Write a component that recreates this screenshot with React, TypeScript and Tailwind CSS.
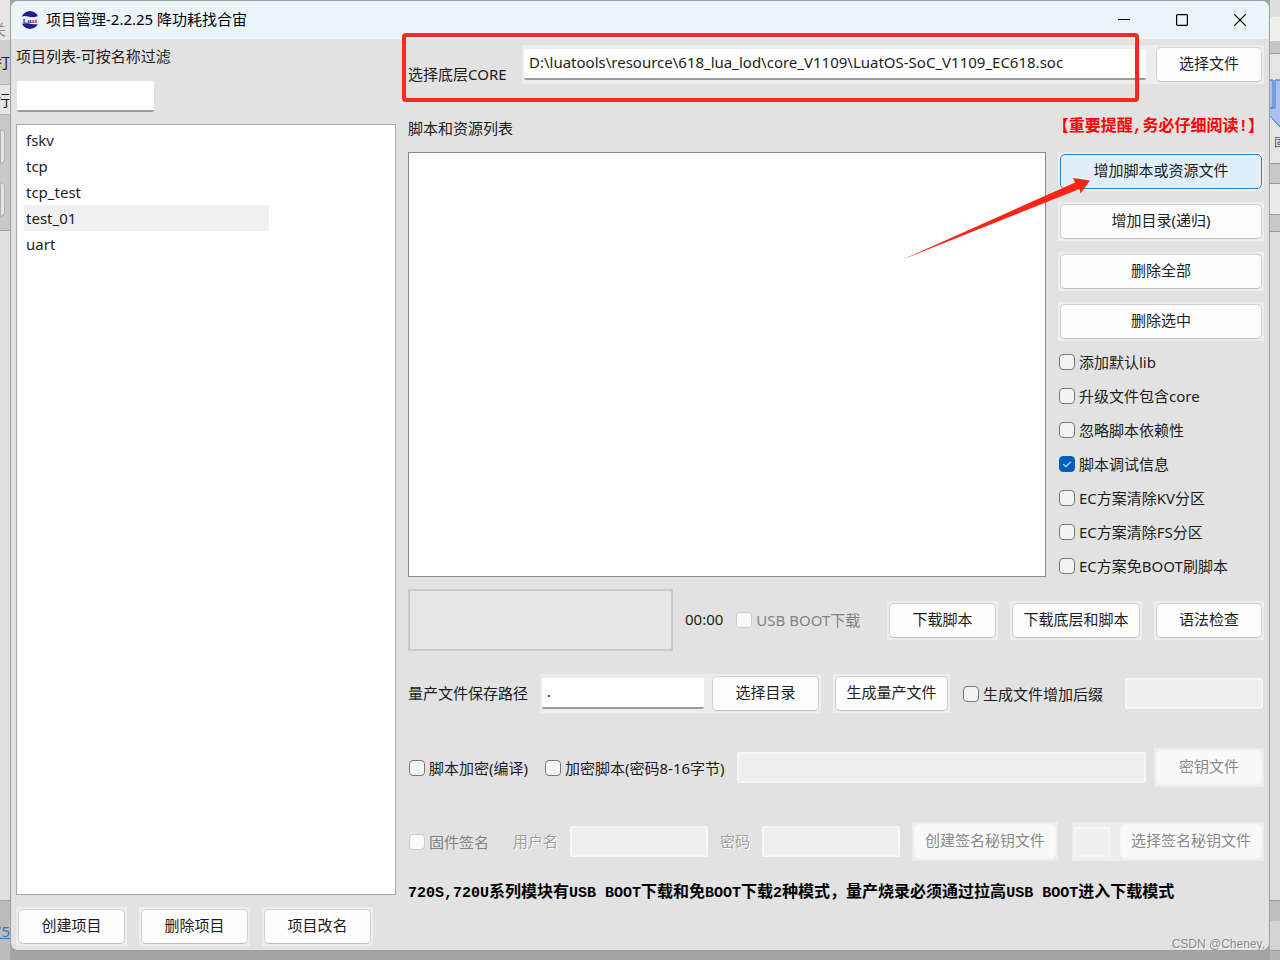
import { useState } from 'react';
import type { ReactNode } from 'react';
import clsx from 'clsx';

const projects = ['fskv', 'tcp', 'tcp_test', 'test_01', 'uart'];

const scriptActions = ['增加脚本或资源文件', '增加目录(递归)', '删除全部', '删除选中'];

const options = [
    { id: 'defaultLib', label: '添加默认lib', checked: false },
    { id: 'includeCore', label: '升级文件包含core', checked: false },
    { id: 'ignoreDeps', label: '忽略脚本依赖性', checked: false },
    { id: 'debugInfo', label: '脚本调试信息', checked: true },
    { id: 'clearKv', label: 'EC方案清除KV分区', checked: false },
    { id: 'clearFs', label: 'EC方案清除FS分区', checked: false },
    { id: 'skipBoot', label: 'EC方案免BOOT刷脚本', checked: false },
];

interface ButtonProps {
    children: ReactNode;
    className?: string;
    active?: boolean;
    disabled?: boolean;
}

function Button({ children, className, active, disabled }: ButtonProps) {
    return (
        <button
            type="button"
            disabled={disabled}
            className={clsx(
                'h-[35px] shrink-0 rounded-[5px] border pb-[3px] whitespace-nowrap',
                active && 'border-[#2b81c9] bg-[#e0eef9]',
                disabled && 'border-[#f6f6f6] bg-[#f9f9f9] text-[#8a8a8a]',
                !active && !disabled && 'border-[#d2d2d2] border-b-[#bdbdbd] bg-[#fdfdfd]',
                className
            )}
        >
            {children}
        </button>
    );
}

// Lighter plate that sits behind native buttons and inputs
function Plate({ children, className }: { children: ReactNode; className?: string }) {
    return <div className={clsx('flex items-center bg-[#ededed] p-[2px]', className)}>{children}</div>;
}

interface CheckboxProps {
    id: string;
    label: string;
    checked?: boolean;
    disabled?: boolean;
}

function Checkbox({ id, label, checked, disabled }: CheckboxProps) {
    return (
        <label htmlFor={id} className={clsx('flex shrink-0 items-center gap-1 pl-px whitespace-nowrap', disabled && 'text-[#838383]')}>
            <span className="relative flex">
                <input
                    type="checkbox"
                    id={id}
                    defaultChecked={checked}
                    disabled={disabled}
                    className="peer size-4 appearance-none rounded-[4px] border border-[#767676] bg-[#f4f4f4] checked:border-[#005fb8] checked:bg-[#005fb8] disabled:border-[#cbcbcb] disabled:bg-[#fafafa]"
                />
                <svg viewBox="0 0 16 16" className="pointer-events-none absolute inset-0 hidden size-4 peer-checked:block">
                    <path d="M4.2 8.2 L6.8 10.7 L11.8 5.8" fill="none" stroke="#d4e6f7" strokeWidth="1.1" />
                </svg>
            </span>
            {label}
        </label>
    );
}

function TextField({ id, label, value, disabled, className }: { id: string; label?: string; value?: string; disabled?: boolean; className?: string }) {
    return (
        <input
            type="text"
            id={id}
            aria-label={label}
            defaultValue={value}
            disabled={disabled}
            className={clsx(
                'min-w-0 rounded-[2px] px-[5px] outline-none',
                disabled ? 'border-2 border-[#f6f6f6] bg-[#efefef]' : 'border-b-2 border-[#9b9b9b] bg-white pb-[3px]',
                className
            )}
        />
    );
}

function Logo() {
    return (
        <svg viewBox="0 0 18 18" className="size-[18px]">
            <circle cx="9" cy="9" r="9" fill="#1d2088" />
            <path d="M0 6 C4 3.800 7 6.200 11 6.200 C14 6.200 16 5.600 18 4.800 V12.400 C14 14 11 13 8 12.500 C5 12 2 12.400 0 13Z" fill="#eef4fa" />
            <text x="9" y="11.6" fontSize="7" fontWeight="bold" fontFamily="Liberation Serif, serif" textAnchor="middle" fill="#1d2088">
                Lu<tspan fill="#d7262b">a</tspan>t
            </text>
        </svg>
    );
}

function TitleBar() {
    return (
        <header className="flex h-[38px] shrink-0 items-center bg-[#ebf4f9] pl-[10px] text-black">
            <Logo />
            <h1 className="ml-[7px] flex-1 pb-0.5">项目管理-2.2.25 降功耗找合宙</h1>
            <button type="button" aria-label="最小化" className="flex h-full w-[58px] items-center justify-center">
                <svg viewBox="0 0 12 12" className="size-3">
                    <path d="M0 5.5 H12" stroke="#000" />
                </svg>
            </button>
            <button type="button" aria-label="最大化" className="flex h-full w-[58px] items-center justify-center">
                <svg viewBox="0 0 12 12" className="size-3">
                    <rect x="0.6" y="0.6" width="10.8" height="10.8" rx="1" fill="none" stroke="#000" strokeWidth="1.2" />
                </svg>
            </button>
            <button type="button" aria-label="关闭" className="flex h-full w-[58px] items-center justify-center">
                <svg viewBox="0 0 12 12" className="size-3">
                    <path d="M0 0 L12 12 M12 0 L0 12" stroke="#000" strokeWidth="1.2" />
                </svg>
            </button>
        </header>
    );
}

// What shows of the parent window on the left side
function LeftEdge() {
    return (
        <div className="flex w-[10px] shrink-0 flex-col overflow-hidden bg-[#c8c8c8] whitespace-nowrap">
            <div className="flex h-10 justify-end bg-[#e6e6e6] pt-[19px] pr-1 text-[#8c8c8c]">关</div>
            <div className="flex h-11 items-center justify-end bg-[#cecece]">打</div>
            <div className="flex h-[31px] items-center justify-end border-y border-[#b4b4b4] bg-[#e6e6e6]">行</div>
            <div className="flex h-[115px] flex-col gap-[18px] pt-[14px] pr-[5px]">
                <div className="h-[35px] rounded-r-[5px] border border-[#b0b0b0] bg-[#e4e4e4]" />
                <div className="h-[35px] rounded-r-[5px] border border-[#b0b0b0] bg-[#e4e4e4]" />
            </div>
            <div className="flex-1 border-y border-[#a0a0a0] bg-[#e0e0e0]" />
            <div className="flex h-[59px] items-center justify-end bg-[#bcbcbc] text-[#3a74b8] underline">75</div>
        </div>
    );
}

function RightEdge() {
    return (
        <div className="flex w-[10px] shrink-0 flex-col overflow-hidden bg-[#c8c8c8] whitespace-nowrap">
            <div className="h-[17px] bg-[#dedede]" />
            <div className="h-6 bg-[#efefef]" />
            <div className="h-3 bg-[#c6c6c6]" />
            <div className="flex h-[110px] flex-col border-t border-[#9c9c9c] bg-[#e4e4e4] pt-[25px]">
                <svg viewBox="0 0 10 50" className="h-[50px] w-[10px] shrink-0">
                    <path d="M0 1 H10 V49 L0 37Z" fill="#a9c1ec" />
                    <path d="M0 1 H3 V29 H0 M10 1 H5 V29 H0 M0 37 L10 48" fill="none" stroke="#3f78cf" />
                </svg>
                <span className="mt-1.5 pl-1 text-xs text-[#555]">固件</span>
            </div>
            <div className="h-[21px] border-y border-[#9c9c9c]" />
            <div className="h-[30px] bg-[#ebebeb]" />
            <div className="h-[18px] border-y border-[#9c9c9c]" />
            <div className="flex-1 bg-[#dedede]" />
            <div className="h-[21px] border-t border-[#9c9c9c] bg-[#bebebe]" />
            <div className="h-[30px] border-b border-[#9c9c9c] bg-[#d4d4d4]" />
            <div className="h-[9px] bg-[#b4b4b4]" />
        </div>
    );
}

function ProjectPanel() {
    const [selected, setSelected] = useState('test_01');

    return (
        <aside className="flex w-[380px] shrink-0 flex-col pt-[7px] pb-1">
            <label htmlFor="filter">项目列表-可按名称过滤</label>
            <TextField id="filter" className="mt-[15px] ml-px h-[31px] w-[137px]" />
            <ul className="mt-3 flex-1 border border-[#a5a9b2] bg-white px-[7px] pt-0.5">
                {projects.map((name) => (
                    <li
                        key={name}
                        onClick={() => setSelected(name)}
                        className={clsx('h-[26px] w-[245px] pl-0.5 leading-[26px]', name === selected && 'bg-[#f0f0f0]')}
                    >
                        {name}
                    </li>
                ))}
            </ul>
            <div className="mt-3 flex gap-3">
                {['创建项目', '删除项目', '项目改名'].map((text) => (
                    <Plate key={text}>
                        <Button className="w-[107px]">{text}</Button>
                    </Plate>
                ))}
            </div>
        </aside>
    );
}

function ScriptPanel() {
    return (
        <main className="flex min-w-0 flex-1 flex-col pt-1.5 pb-[46px]">
            <div className="relative flex items-end">
                <label htmlFor="core" className="mr-3 w-[102px] shrink-0">选择底层CORE</label>
                <Plate className="min-w-0 flex-1 gap-[10px]">
                    <TextField id="core" value="D:\luatools\resource\618_lua_lod\core_V1109\LuatOS-SoC_V1109_EC618.soc" className="h-[31px] flex-1" />
                    <Button className="w-[106px]">选择文件</Button>
                </Plate>
                <div className="pointer-events-none absolute -top-3 right-[125px] -bottom-[18px] -left-1.5 rounded-[4px] border-4 border-[#f72a1d]" />
            </div>

            <div className="flex items-end justify-between pt-[33px] pb-[14px]">
                <h2>脚本和资源列表</h2>
                <strong className="mb-px font-['Liberation_Mono','Noto_Sans_CJK_SC',monospace] text-base leading-5 text-[#f00]">
                    【重要提醒,务必仔细阅读!】
                </strong>
            </div>

            <div className="relative flex flex-1">
                <div className="mb-3 flex-1 border border-[#868b94] bg-white" />
                <div className="ml-3 flex w-[206px] flex-col">
                    <div className="flex flex-col gap-[11px]">
                        {scriptActions.map((text, i) => (
                            <Plate key={text}>
                                <Button active={i === 0} className="w-full">{text}</Button>
                            </Plate>
                        ))}
                    </div>
                    <div className="mt-1">
                        {options.map((option) => (
                            <div key={option.id} className="flex h-[34px] items-center">
                                <Checkbox {...option} />
                            </div>
                        ))}
                    </div>
                </div>
                <svg viewBox="0 0 192 88" className="pointer-events-none absolute top-[24px] right-[172px] h-[88px] w-[192px]">
                    <path d="M1.500 84 L175 6.500 L173 2 L190 4.500 L180.500 17.500 L179.500 13 Z" fill="#fb2415" />
                </svg>
            </div>

            <div className="flex items-center">
                <div className="h-[62px] w-[265px] shrink-0 border-2 border-[#c9c9c9] bg-[#e6e6e6]" />
                <time className="mx-3 pb-0.5">00:00</time>
                <Checkbox id="usbBoot" label="USB BOOT下载" disabled />
                <div className="ml-auto flex gap-3">
                    <Plate><Button className="w-[107px]">下载脚本</Button></Plate>
                    <Plate><Button className="w-[128px]">下载底层和脚本</Button></Plate>
                    <Plate><Button className="w-[106px]">语法检查</Button></Plate>
                </div>
            </div>

            <div className="mt-[23px] flex items-center gap-3">
                <label htmlFor="savePath" className="shrink-0 pb-0.5">量产文件保存路径</label>
                <Plate className="gap-2">
                    <TextField id="savePath" value="." className="h-[31px] w-[162px]" />
                    <Button className="w-[107px]">选择目录</Button>
                </Plate>
                <Plate><Button className="w-[113px]">生成量产文件</Button></Plate>
                <Checkbox id="suffix" label="生成文件增加后缀" />
                <TextField id="suffixText" label="后缀" disabled className="mr-px ml-auto h-[31px] w-[138px]" />
            </div>

            <div className="mt-[35px] flex items-center">
                <Checkbox id="encryptCompile" label="脚本加密(编译)" />
                <div className="ml-4">
                    <Checkbox id="encryptScript" label="加密脚本(密码8-16字节)" />
                </div>
                <TextField id="scriptPassword" label="加密密码" disabled className="mr-2 ml-3 h-[31px] flex-1" />
                <Plate><Button disabled className="w-[106px]">密钥文件</Button></Plate>
            </div>

            <div className="mt-[35px] flex items-center gap-3">
                <Checkbox id="sign" label="固件签名" disabled />
                <label htmlFor="userName" className="ml-3 shrink-0 pb-0.5 text-[#a0a0a0] text-shadow-[1px_1px_0_#fff]">用户名</label>
                <TextField id="userName" disabled className="h-[31px] w-[138px]" />
                <label htmlFor="password" className="shrink-0 pb-0.5 text-[#a0a0a0] text-shadow-[1px_1px_0_#fff]">密码</label>
                <TextField id="password" disabled className="h-[31px] w-[138px]" />
                <Plate><Button disabled className="w-[142px]">创建签名秘钥文件</Button></Plate>
                <Plate className="ml-auto gap-[10px]">
                    <TextField id="signFile" label="签名秘钥文件" disabled className="h-[30px] w-9" />
                    <Button disabled className="w-[142px]">选择签名秘钥文件</Button>
                </Plate>
            </div>

            <p className="mt-[22px] font-['Liberation_Mono','Noto_Sans_CJK_SC',monospace] text-[15px] leading-5 font-bold whitespace-nowrap text-black">
                720S,720U<span className="text-base leading-5">系列模块有</span>USB BOOT<span className="text-base leading-5">下载和免</span>BOOT
                <span className="text-base leading-5">下载</span>2<span className="text-base leading-5">种模式，量产烧录必须通过拉高</span>USB BOOT
                <span className="text-base leading-5">进入下载模式</span>
            </p>
        </main>
    );
}

function App() {
    return (
        <div className="flex min-h-screen bg-[#a4a4a4] font-['Noto_Sans','Noto_Sans_CJK_SC',sans-serif] text-[15px] leading-5 text-[#1c1c1c]">
            <LeftEdge />
            <div className="relative mb-[9px] flex min-w-0 flex-1 flex-col overflow-hidden rounded-lg border border-[#9e9e9e] bg-[#e2e2e2]">
                <TitleBar />
                <div className="flex flex-1 gap-3 px-[5px]">
                    <ProjectPanel />
                    <ScriptPanel />
                </div>
                <span className="absolute right-1 -bottom-1 font-['Liberation_Sans',sans-serif] text-xs leading-5 text-[#8a8a8a] text-shadow-[1px_1px_0_#f4f4f4]">
                    CSDN @Cheney,
                </span>
            </div>
            <RightEdge />
        </div>
    );
}

export default App;
